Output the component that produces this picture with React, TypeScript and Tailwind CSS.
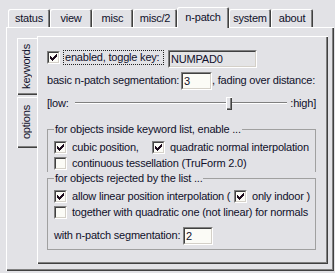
import React from "react";

const BG = "bg-[#e2e2e6]";

function Check({ checked }: { checked?: boolean }) {
  return (
    <span className="inline-flex w-[13px] h-[13px] shrink-0 border border-t-[#808080] border-l-[#808080] border-b-white border-r-white">
      <span className="flex-1 flex items-center justify-center border border-t-[#404040] border-l-[#404040] border-b-[#d4d0c8] border-r-[#d4d0c8] bg-[#fbfbf6]">
        {checked && (
          <svg width="7" height="7" viewBox="0 0 7 7" shapeRendering="crispEdges">
            <g fill="#1c0a1c">
              <rect x="6" y="0" width="1" height="3" />
              <rect x="5" y="1" width="1" height="3" />
              <rect x="4" y="2" width="1" height="3" />
              <rect x="3" y="3" width="1" height="3" />
              <rect x="2" y="4" width="1" height="3" />
              <rect x="1" y="3" width="1" height="3" />
              <rect x="0" y="2" width="1" height="3" />
            </g>
          </svg>
        )}
      </span>
    </span>
  );
}

function TextBox({ value, w, bg }: { value: string; w: string; bg: string }) {
  return (
    <div className={`${w} h-[18px] shrink-0 border border-t-[#808080] border-l-[#808080] border-b-white border-r-white`}>
      <div className={`h-full border border-t-[#404040] border-l-[#404040] border-b-[#d4d0c8] border-r-[#d4d0c8] ${bg} pl-[1px] leading-[14px]`}>
        {value}
      </div>
    </div>
  );
}

function Tab({ label, w, sel }: { label: string; w: string; sel?: boolean }) {
  if (sel) {
    return (
      <div
        className={`relative z-10 ${w} h-[21px] mb-[-1px] ${BG} rounded-t-[2px] shadow-[inset_1px_1px_0_#fff,inset_-1px_0_0_#404040,inset_-2px_0_0_#808080] flex justify-center pt-[4px]`}
      >
        {label}
      </div>
    );
  }
  return (
    <div
      className={`${w} h-[18px] rounded-t-[2px] shadow-[inset_1px_1px_0_#fff,inset_-1px_0_0_#404040,inset_-2px_0_0_#808080] flex justify-center pt-[3px]`}
    >
      {label}
    </div>
  );
}

export default function App() {
  return (
    <div
      className={`w-[335px] h-[273px] ${BG} overflow-hidden text-[11px] leading-[13px] tracking-[-0.2px] text-[#10102a] font-['Liberation_Sans',Arial,sans-serif] whitespace-nowrap`}
    >
      {/* top tabs */}
      <div className="flex items-end h-[27px] pl-[8px]">
        <Tab label="status" w="w-[42px]" />
        <Tab label="view" w="w-[42px]" />
        <Tab label="misc" w="w-[41px]" />
        <Tab label="misc/2" w="w-[44px]" />
        <Tab label="n-patch" w="w-[52px]" sel />
        <Tab label="system" w="w-[42px]" />
        <Tab label="about" w="w-[42px]" />
      </div>

      {/* outer panel */}
      <div className="ml-[6px] w-[328px] h-[244px] pt-[9px] pl-[11px] flex shadow-[inset_1px_1px_0_#fff,inset_-1px_-1px_0_#404040,inset_-2px_-2px_0_#808080]">
        {/* vertical tabs */}
        <div className="w-[20px] pt-[2px] flex flex-col">
          <div className="h-[57px] w-[20px] flex items-center justify-center shadow-[inset_1px_1px_0_#fff,inset_0_-1px_0_#404040,inset_0_-2px_0_#808080]">
            <span className="[writing-mode:vertical-rl] rotate-180 pl-[1px]">keywords</span>
          </div>
          <div className="mt-[2px] h-[51px] w-[20px] flex items-center justify-center shadow-[inset_1px_1px_0_#fff,inset_0_-1px_0_#404040,inset_0_-2px_0_#808080]">
            <span className="[writing-mode:vertical-rl] rotate-180 pl-[1px]">options</span>
          </div>
        </div>

        {/* inner panel */}
        <div className="w-[291px] h-[228px] pl-[10px] pr-[12px] pt-[12px] flex flex-col shadow-[inset_1px_1px_0_#fff,inset_-1px_-1px_0_#404040,inset_-2px_-2px_0_#808080]">
          {/* row 1 */}
          <div className="flex items-center h-[19px]">
            <Check checked />
            <span className="ml-[3px] h-[15px] border border-dotted border-[#222] px-[1px] leading-[13px] w-[101px]">
              enabled, toggle key:
            </span>
            <div className="ml-[4px] mt-[2px]">
              <TextBox value="NUMPAD0" w="w-[89px]" bg="bg-[#e4e4e6]" />
            </div>
          </div>

          {/* row 2 */}
          <div className="flex items-center h-[19px] mt-[4px]">
            <span className="w-[134px]">basic n-patch segmentation:</span>
            <TextBox value="3" w="w-[31px]" bg="bg-[#fbfbf6]" />
            <span>, fading over distance:</span>
          </div>

          {/* row 3 slider */}
          <div className="flex items-center h-[14px] mt-[6px]">
            <span className="w-[28px]">[low:</span>
            <div className="flex-1 flex items-center">
              <div className="w-[151px] h-[2px] border-t border-t-[#808080] border-b border-b-white" />
              <div className="w-[6px] h-[13px] shrink-0 shadow-[inset_1px_1px_0_#fff,inset_-1px_-1px_0_#404040,inset_-2px_-2px_0_#808080]" />
              <div className="flex-1 h-[2px] border-t border-t-[#808080] border-b border-b-white" />
            </div>
            <span className="ml-[3px]">:high]</span>
          </div>

          {/* group 1 */}
          <fieldset className="mt-[13px] border border-b-0 border-[#a0a0a0] pl-[6px] pt-[3px] pb-[1px]">
            <legend className="px-[1px]">for objects inside keyword list, enable ...</legend>
            <div className="flex items-center h-[16px]">
              <Check checked />
              <span className="ml-[5px] w-[80px]">cubic position,</span>
              <Check checked />
              <span className="ml-[5px]">quadratic normal interpolation</span>
            </div>
            <div className="flex items-center h-[16px]">
              <Check />
              <span className="ml-[5px]">continuous tessellation (TruForm 2.0)</span>
            </div>
          </fieldset>

          {/* group 2 */}
          <fieldset className="border border-[#a0a0a0] pl-[6px] pt-[3px] pb-[4px]">
            <legend className="px-[1px]">for objects rejected by the list ...</legend>
            <div className="flex items-center h-[16px]">
              <Check checked />
              <span className="ml-[5px] w-[162px]">allow linear position interpolation (</span>
              <Check checked />
              <span className="ml-[5px]">only indoor )</span>
            </div>
            <div className="flex items-center h-[16px]">
              <Check />
              <span className="ml-[5px]">together with quadratic one (not linear) for normals</span>
            </div>
            <div className="flex items-center h-[19px] mt-[6px]">
              <span className="w-[129px]">with n-patch segmentation:</span>
              <TextBox value="2" w="w-[30px]" bg="bg-[#fbfbf6]" />
            </div>
          </fieldset>
        </div>
      </div>
    </div>
  );
}
